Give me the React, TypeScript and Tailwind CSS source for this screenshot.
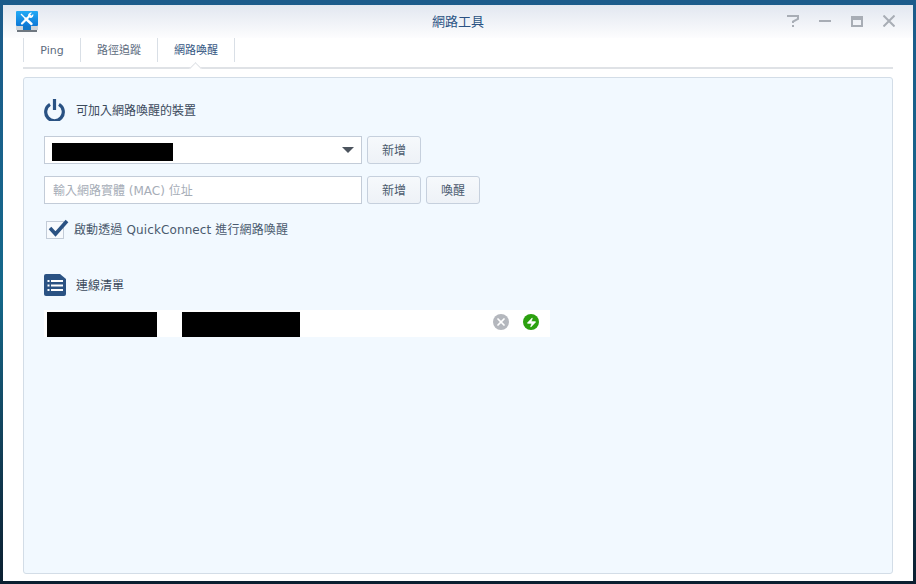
import { X, Zap } from 'lucide-react'

function ToolbarButton({ label }: { label: string }) {
  return (
    <button className="flex h-[28px] w-[54px] items-center justify-center rounded-[3px] border border-[#c6d0dd] bg-gradient-to-b from-[#f6f9fc] to-[#eef2f7] pt-[2px] text-[12px] text-[#4a5a6e]">
      {label}
    </button>
  )
}

function SectionTitle({ icon, label }: { icon: React.ReactNode; label: string }) {
  return (
    <div className="flex h-[24px] items-center">
      <div className="flex w-[32px] items-center">{icon}</div>
      <span className="pt-[1px] text-[12px] text-[#3b4a5c]">{label}</span>
    </div>
  )
}

function AppIcon() {
  return (
    <svg width="22" height="22" viewBox="0 0 22 22">
      <defs>
        <linearGradient id="appBlue" x1="0" y1="0" x2="0" y2="1">
          <stop offset="0" stopColor="#22aaf6" />
          <stop offset="1" stopColor="#0d78d6" />
        </linearGradient>
      </defs>
      <rect x="0" y="0" width="22" height="15" rx="1" fill="url(#appBlue)" />
      {/* wrench */}
      <path d="M6 12.5 L13.5 5" stroke="#fff" strokeWidth="2.2" strokeLinecap="round" />
      <path d="M12 4.5 A3 3 0 0 1 16 1.8 L14.2 3.6 L15.4 4.8 L17.2 3 A3 3 0 0 1 14.4 7 Z" fill="#fff" />
      {/* screwdriver */}
      <path d="M5 3 L9 7" stroke="#fff" strokeWidth="1.2" />
      <path d="M9.5 7.5 L15.5 13" stroke="#fff" strokeWidth="2.4" strokeLinecap="round" />
      <rect x="0" y="15" width="22" height="4" fill="#cfd4d9" />
      <rect x="7" y="15" width="8" height="4" fill="#1277c9" />
      <rect x="1" y="19" width="20" height="2" fill="#6f7780" />
    </svg>
  )
}

function ListIcon() {
  return (
    <svg width="22" height="22" viewBox="0 0 22 22">
      <path d="M2 0 H16 L22 5 V20 a2 2 0 0 1 -2 2 H2 a2 2 0 0 1 -2 -2 V2 a2 2 0 0 1 2 -2 Z" fill="#2a5283" />
      <rect x="3.5" y="6" width="2" height="2" fill="#fff" />
      <rect x="7" y="6" width="12" height="2" fill="#fff" />
      <rect x="3.5" y="10.5" width="2" height="2" fill="#fff" />
      <rect x="7" y="10.5" width="12" height="2" fill="#fff" />
      <rect x="3.5" y="15" width="2" height="2" fill="#fff" />
      <rect x="7" y="15" width="12" height="2" fill="#fff" />
    </svg>
  )
}

function PowerIcon() {
  return (
    <svg width="21" height="22" viewBox="0 0 21 22" fill="none" stroke="#2a5283" strokeWidth="3.2">
      <path d="M6 5.4 A8.8 8.8 0 1 0 15 5.4" />
      <path d="M10.5 0 V11" />
    </svg>
  )
}

export default function App() {
  return (
    <div className="h-[584px] w-[916px] bg-gradient-to-b from-[#1c5b8b] via-[#14688a] to-[#0b1f30] pb-[3px] pl-[3px] pr-[3px] pt-[5px] font-['DejaVu_Sans','Noto_Sans_CJK_TC',sans-serif]">
      <div className="flex h-[576px] w-[910px] flex-col bg-white">
        <header className="relative flex h-[33px] shrink-0 items-center justify-center bg-gradient-to-b from-[#e2e7f0] to-[#fdfdfe] text-[13px] text-[#2a5283]">
          <div className="absolute left-[13px] top-[6px]">
            <AppIcon />
          </div>
          <span>網路工具</span>
          <div className="absolute left-[784px] top-[10px] flex items-center gap-[20px]">
            <svg width="12" height="12" viewBox="0 0 12 12" fill="none" stroke="#a8adb5" strokeWidth="2">
              <path d="M0 1 H11 V4 L6 6.5 V8" />
              <path d="M5 10 H7 V12 H5 Z" fill="#a8adb5" stroke="none" />
            </svg>
            <span className="h-[2px] w-[12px] bg-[#a8adb5]" />
            <span className="h-[11px] w-[12px] border-[2px] border-t-[4px] border-[#a8adb5]" />
            <svg width="12" height="12" viewBox="0 0 12 12" stroke="#a8adb5" strokeWidth="2">
              <path d="M0.5 0.5 L11.5 11.5 M11.5 0.5 L0.5 11.5" />
            </svg>
          </div>
        </header>

        <nav className="mx-[20px] flex h-[31px] shrink-0 items-start border-b-2 border-[#dfe2e6] text-[11px] text-[#5c6b7d]">
          <div className="flex h-[24px] w-[58px] items-center justify-center border-x border-[#d9dfe6] pt-[2px]">Ping</div>
          <div className="flex h-[24px] w-[77px] items-center justify-center border-r border-[#d9dfe6] pt-[2px]">路徑追蹤</div>
          <div className="relative flex h-[24px] w-[77px] items-center justify-center border-r border-[#d9dfe6] pt-[2px] text-[#33557f]">
            網路喚醒
            <span className="absolute left-[33px] top-[26px] size-[9px] rotate-45 border-l border-t border-[#dfe2e6] bg-white" />
          </div>
        </nav>

        <main className="mx-[20px] mb-[7px] mt-[8px] min-h-0 flex-1 rounded-[3px] border border-[#d3dde7] bg-[#f2f9ff] pl-[20px] pt-[20px]">
          <SectionTitle icon={<PowerIcon />} label="可加入網路喚醒的裝置" />

          <div className="mt-[14px] flex gap-[5px]">
            <div className="flex h-[28px] w-[318px] items-center justify-between border border-[#c3ccd8] bg-white pl-[7px] pr-[6px]">
              <div className="mt-[3px] h-[18px] w-[121px] bg-black" />
              <span className="mr-[1px] h-0 w-0 border-x-[6px] border-t-[6px] border-x-transparent border-t-[#4c545e]" />
            </div>
            <ToolbarButton label="新增" />
          </div>

          <div className="mt-[12px] flex gap-[5px]">
            <div className="flex h-[28px] w-[318px] items-center border border-[#c3ccd8] bg-white pl-[8px] pt-[2px] text-[12px] text-[#a6adb7]">
              輸入網路實體 (MAC) 位址
            </div>
            <ToolbarButton label="新增" />
            <ToolbarButton label="喚醒" />
          </div>

          <div className="mt-[16px] flex h-[20px] items-center pl-[2px]">
            <div className="relative size-[18px] border border-[#c3ccd8] bg-[#f7fafd]">
              <svg width="21" height="18" viewBox="0 0 21 18" fill="none" stroke="#2a5283" strokeWidth="3.6" className="absolute -top-[3px] left-[1px]">
                <path d="M2 9 L7.5 15 L19 2" />
              </svg>
            </div>
            <span className="ml-[10px] text-[12px] tracking-[0.12px] text-[#4a5a6e]">啟動透過 QuickConnect 進行網路喚醒</span>
          </div>

          <div className="mt-[33px]">
            <SectionTitle icon={<ListIcon />} label="連線清單" />
          </div>

          <div className="mt-[13px] flex h-[27px] w-[506px] items-end bg-white pl-[3px]">
            <div className="h-[25px] w-[110px] bg-black" />
            <div className="ml-[25px] h-[25px] w-[118px] bg-black" />
            <div className="ml-auto flex items-center gap-[14px] pb-[7px] pr-[11px]">
              <span className="flex size-[16px] items-center justify-center rounded-full bg-[#b4b7bd]">
                <X size={12} strokeWidth={3.5} className="text-white" />
              </span>
              <span className="flex size-[16px] items-center justify-center rounded-full bg-[#2ba00f]">
                <Zap size={11} fill="#fff" strokeWidth={1} className="text-white" />
              </span>
            </div>
          </div>
        </main>
      </div>
    </div>
  )
}
